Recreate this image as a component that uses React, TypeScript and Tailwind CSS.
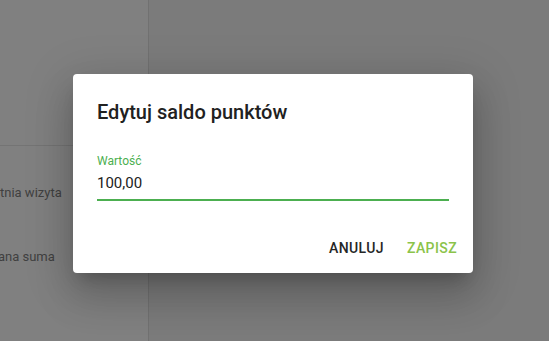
import React from 'react';

const EditPointsDialog: React.FC = () => {
  return (
    <div className="absolute left-[73px] top-[74px] w-[400px] rounded-[4px] bg-white shadow-[0_11px_15px_-7px_rgba(0,0,0,0.2),0_24px_38px_3px_rgba(0,0,0,0.14),0_9px_46px_8px_rgba(0,0,0,0.12)]">
      <h2 className="px-6 pt-[22px] text-[20px] font-medium leading-[32px] text-[#212121]">
        Edytuj saldo punktów
      </h2>
      <div className="px-6 pt-[25px]">
        <label className="block text-[12px] leading-[16px] text-[#4caf50]">Wartość</label>
        <div className="mt-1 border-b-2 border-[#4caf50] pb-[6px] text-[15px] leading-[20px] text-[#212121]">
          100,00
        </div>
      </div>
      <div className="flex justify-end gap-[7px] px-2 pb-[7px] pt-[29px]">
        <button className="flex h-9 min-w-16 items-center justify-center px-2 text-[14px] font-medium tracking-[0.4px] text-[#262626]">
          ANULUJ
        </button>
        <button className="flex h-9 min-w-16 items-center justify-center px-2 text-[14px] font-medium tracking-[0.4px] text-[#8bc34a]">
          ZAPISZ
        </button>
      </div>
    </div>
  );
};

export default function App() {
  return (
    <div className="relative h-[341px] w-[549px] overflow-hidden font-['Roboto',sans-serif]">
      <div className="flex h-full">
        <aside className="w-[149px] shrink-0 overflow-hidden border-r border-[#717171] bg-[#808080]">
          <div className="h-[146px] border-b border-[#747474]" />
          <div className="-ml-[27px] w-[200px] pt-[37px] text-[13px] leading-[20px] text-[#404040]">
            <div className="whitespace-nowrap">Ostatnia wizyta</div>
            <div className="mt-5 ml-[7px] whitespace-nowrap text-[11px] text-[#1d6f7d]">120</div>
            <div className="mt-1 whitespace-nowrap">Wydana suma</div>
          </div>
        </aside>
        <main className="flex-1 bg-[#7b7b7b]" />
      </div>
      <EditPointsDialog />
    </div>
  );
}
